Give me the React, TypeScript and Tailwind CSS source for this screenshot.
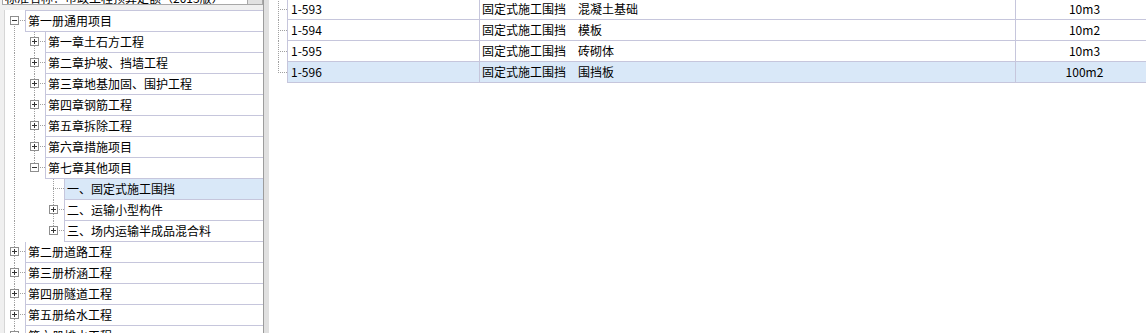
import React from "react";

type Seg = "full" | "top" | "bottom";
type Lvl = 0 | 1 | 2;
type TreeNode = { t: string; l: Lvl; box?: "+" | "-"; v: [Lvl, Seg][]; sel?: boolean };

// tree x positions (relative to tree body)
const CX = [9, 29, 48];
const GUT = [20, 40, 59];
const LINE = "#a0a0a0";

const tree: TreeNode[] = [
  { t: "第一册通用项目", l: 0, box: "-", v: [[0, "bottom"]] },
  { t: "第一章土石方工程", l: 1, box: "+", v: [[0, "full"], [1, "full"]] },
  { t: "第二章护坡、挡墙工程", l: 1, box: "+", v: [[0, "full"], [1, "full"]] },
  { t: "第三章地基加固、围护工程", l: 1, box: "+", v: [[0, "full"], [1, "full"]] },
  { t: "第四章钢筋工程", l: 1, box: "+", v: [[0, "full"], [1, "full"]] },
  { t: "第五章拆除工程", l: 1, box: "+", v: [[0, "full"], [1, "full"]] },
  { t: "第六章措施项目", l: 1, box: "+", v: [[0, "full"], [1, "full"]] },
  { t: "第七章其他项目", l: 1, box: "-", v: [[0, "full"], [1, "top"]] },
  { t: "一、固定式施工围挡", l: 2, v: [[0, "full"], [2, "full"]], sel: true },
  { t: "二、运输小型构件", l: 2, box: "+", v: [[0, "full"], [2, "full"]] },
  { t: "三、场内运输半成品混合料", l: 2, box: "+", v: [[0, "full"], [2, "top"]] },
  { t: "第二册道路工程", l: 0, box: "+", v: [[0, "full"]] },
  { t: "第三册桥涵工程", l: 0, box: "+", v: [[0, "full"]] },
  { t: "第四册隧道工程", l: 0, box: "+", v: [[0, "full"]] },
  { t: "第五册给水工程", l: 0, box: "+", v: [[0, "full"]] },
  { t: "第六册排水工程", l: 0, box: "+", v: [[0, "full"]] },
];

const items = [
  { code: "1-593", name: "固定式施工围挡\u3000混凝土基础", unit: "10m3" },
  { code: "1-594", name: "固定式施工围挡\u3000模板", unit: "10m2" },
  { code: "1-595", name: "固定式施工围挡\u3000砖砌体", unit: "10m3" },
  { code: "1-596", name: "固定式施工围挡\u3000围挡板", unit: "100m2", sel: true },
];

function Box({ cx, top, kind }: { cx: number; top: number; kind: "+" | "-" }) {
  const c = top + 4;
  return (
    <g shapeRendering="crispEdges">
      <rect x={cx - 4 + 0.5} y={top + 0.5} width={8} height={8} fill="#fff" stroke="#8e8e8e" />
      <line x1={cx - 2} x2={cx + 3} y1={c + 0.5} y2={c + 0.5} stroke="#333" />
      {kind === "+" && <line x1={cx + 0.5} x2={cx + 0.5} y1={c - 2} y2={c + 3} stroke="#333" />}
    </g>
  );
}

function Gutter({ node, h, mid }: { node: TreeNode; h: number; mid: number }) {
  const w = GUT[node.l];
  const cx = CX[node.l];
  return (
    <svg width={w} height={h} className="shrink-0">
      <g stroke={LINE} strokeDasharray="1 1" shapeRendering="crispEdges">
        {node.v.map(([lv, seg], i) => {
          const x = CX[lv] + 0.5;
          const y1 = seg === "bottom" ? mid : 0;
          const y2 = seg === "top" ? mid : h;
          return <line key={i} x1={x} x2={x} y1={y1} y2={y2} />;
        })}
        <line x1={cx} x2={w} y1={mid + 0.5} y2={mid + 0.5} />
      </g>
      {node.box && <Box cx={cx} top={mid - 4} kind={node.box} />}
    </svg>
  );
}

export default function App() {
  return (
    <div className="w-[1146px] h-[333px] overflow-hidden flex bg-white text-[12px] text-black font-['Noto_Sans_CJK_SC','Liberation_Sans',sans-serif]">
      {/* left: norm tree */}
      <div className="w-[263px] shrink-0 flex flex-col bg-[#f0f0f0]">
        <div className="h-[10px] flex">
          <div className="w-[245px] ml-[2px] h-[5px] bg-white border-b border-l border-[#a8a8a8] overflow-hidden">
            <div className="leading-[12px] -mt-[8px] pl-[2px] whitespace-nowrap">标准名称：市政工程预算定额（2013版）</div>
          </div>
          <div className="w-[16px] h-[5px] bg-[#e1e1e1] border border-t-0 border-[#a8a8a8]" />
        </div>
        <div className="flex-1 ml-[4px] bg-white border-l border-[#d6d6d6] overflow-hidden">
          {tree.map((n, i) => {
            const first = i === 0;
            return (
              <div key={i} className={first ? "flex h-[22px]" : "flex h-[21px]"}>
                <Gutter node={n} h={first ? 22 : 21} mid={first ? 10 : 9} />
                <div
                  className={
                    "flex-1 min-w-0 border-l border-b border-[#c6c6dc] pl-[2px] leading-[20px] whitespace-nowrap overflow-hidden " +
                    (first ? "border-t " : "") +
                    (n.sel ? "bg-[#d9e8f8]" : "")
                  }
                >
                  {n.t}
                </div>
              </div>
            );
          })}
        </div>
      </div>

      {/* splitter */}
      <div className="w-[6px] shrink-0 bg-[#e0e0e0] border-l border-[#9c9c9c]" />

      {/* right: item list */}
      <div className="flex-1 min-w-0 -mt-px">
        {items.map((it, i) => {
          const last = i === items.length - 1;
          const cell = "h-[21px] border-l border-b border-[#c6c6dc] leading-[20px] whitespace-nowrap overflow-hidden " + (it.sel ? "bg-[#d9e8f8] " : "");
          return (
            <div key={it.code} className="flex h-[21px]">
              <svg width={18} height={21} className="shrink-0">
                <g stroke={LINE} strokeDasharray="1 1" shapeRendering="crispEdges">
                  <line x1={9.5} x2={9.5} y1={0} y2={last ? 10 : 21} />
                  <line x1={9} x2={18} y1={10.5} y2={10.5} />
                </g>
              </svg>
              <div className={cell + "w-[192px] shrink-0 pl-[3px]"}>{it.code}</div>
              <div className={cell + "w-[536px] shrink-0 pl-[2px]"}>{it.name}</div>
              <div className={cell + "w-[138px] shrink-0 text-center"}>{it.unit}</div>
            </div>
          );
        })}
      </div>
    </div>
  );
}
